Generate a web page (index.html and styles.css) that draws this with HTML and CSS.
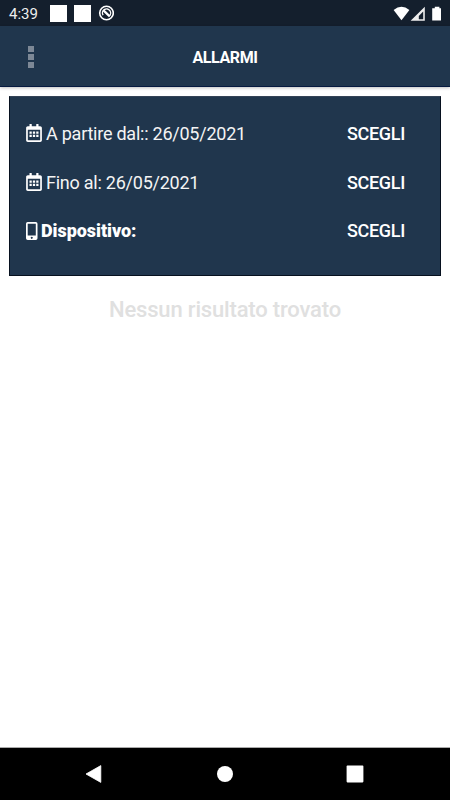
FILE: index.html
```html
<!DOCTYPE html>
<html lang="it">
<head>
    <meta charset="UTF-8">
    <meta name="viewport" content="width=device-width, initial-scale=1.0">
    <title>Allarmi</title>
    <link rel="stylesheet" href="styles.css">
</head>
<body>
    <svg width="0" height="0" class="defs">
        <symbol id="calendar" viewBox="0 0 448 512">
            <path fill-rule="evenodd" d="M400 64h-48V12c0-7-5-12-12-12h-40c-7 0-12 5-12 12v52H160V12c0-7-5-12-12-12h-40c-7 0-12 5-12 12v52H48C22 64 0 86 0 112v352c0 26 22 48 48 48h352c26 0 48-22 48-48V112c0-26-22-48-48-48zM48 160h352v298c0 3-3 6-6 6H54c-3 0-6-3-6-6z"/>
            <path d="M96 210h64v64H96zM192 210h64v64h-64zM288 210h64v64h-64zM96 306h64v64H96zM192 306h64v64h-64zM288 306h64v64h-64z"/>
        </symbol>
    </svg>

    <div class="status-bar">
        <span class="clock">4:39</span>
        <span class="notification"></span>
        <span class="notification"></span>
        <svg class="app-icon" viewBox="0 0 16 16">
            <circle cx="8.5" cy="8" r="6.8" fill="none" stroke="#fff" stroke-width="1.6"/>
            <path d="M5.1 10.2A4.1 4.1 0 1 1 11.1 11.2" fill="none" stroke="#fff" stroke-width="1.4"/>
            <path d="M5.7 5.6l6 5.8" stroke="#fff" stroke-width="2.2"/>
        </svg>
        <svg class="system-icons" viewBox="0 0 50 16">
            <path d="M0.6 4Q8.5-2.6 16.4 4L8.5 14.2z" fill="#fff"/>
            <path fill-rule="evenodd" d="M31.8 0.8V14.8H17.6zM30.2 5.5L25.8 10V13.2H30.2z" fill="#eee"/>
            <path d="M41.8 0.8h4.6v1.4H48v12.4h-8.8V2.2h2.6z" fill="#fff"/>
        </svg>
    </div>

    <header class="header">
        <button class="menu" aria-label="Menu"><span></span><span></span><span></span></button>
        <h1>ALLARMI</h1>
    </header>

    <main>
        <div class="filters">
            <div class="row">
                <svg class="calendar"><use href="#calendar"/></svg>
                <span class="label">A partire dal:: 26/05/2021</span>
                <button class="btn">SCEGLI</button>
            </div>
            <div class="row">
                <svg class="calendar"><use href="#calendar"/></svg>
                <span class="label">Fino al: 26/05/2021</span>
                <button class="btn">SCEGLI</button>
            </div>
            <div class="row">
                <svg class="phone" viewBox="0 0 12 18">
                    <path fill-rule="evenodd" d="M1.7 0h8.1q1.7 0 1.7 1.7v14.6q0 1.7-1.7 1.7H1.7Q0 18 0 16.3V1.7Q0 0 1.7 0zM1.7 1.8v11.8h8.1V1.8zM5.75 14.7a1 1 0 1 0 0.01 0z"/>
                </svg>
                <span class="label device">Dispositivo:</span>
                <button class="btn">SCEGLI</button>
            </div>
        </div>
        <p class="empty">Nessun risultato trovato</p>
    </main>

    <nav class="nav-bar">
        <svg viewBox="0 0 18 18"><path d="M1 9L15.8 0.6V17.4z" stroke="#fff" stroke-width="0.8" stroke-linejoin="round"/></svg>
        <svg viewBox="0 0 18 18"><circle cx="9" cy="9" r="8"/></svg>
        <svg viewBox="0 0 18 18"><rect x="0.6" y="0.6" width="16.8" height="16.8" rx="0.8"/></svg>
    </nav>
</body>
</html>
```
FILE: styles.css
```css
* {
    box-sizing: border-box;
}
body {
    margin: 0;
    height: 100vh;
    display: flex;
    flex-direction: column;
    overflow: hidden;
    font-family: Roboto, sans-serif;
    background: #fff;
    color: #fff;
}
button {
    padding: 0;
    border: none;
    background: none;
    color: inherit;
    font-family: inherit;
}
.defs {
    position: absolute;
}
.status-bar {
    height: 26px;
    flex: none;
    display: flex;
    align-items: center;
    padding: 1px 8px 0 9px;
    background: #141f2d;
}
.clock {
    width: 41px;
    font-size: 15px;
    color: #eee;
}
.notification {
    width: 17px;
    height: 17px;
    margin-right: 7px;
    background: #fff;
}
.app-icon {
    width: 16px;
    height: 16px;
    margin-top: -1px;
}
.system-icons {
    width: 50px;
    height: 16px;
    margin-left: auto;
    margin-right: -1px;
}
.header {
    height: 61px;
    flex: none;
    display: grid;
    grid-template-columns: 62px 1fr 62px;
    align-items: center;
    background: #20364d;
    border-bottom: 1px solid #061a40;
    box-shadow: 0 1px 3px rgba(0, 0, 0, 0.25);
}
.header h1 {
    margin: 2px 0 0;
    text-align: center;
    font-size: 16px;
    font-weight: 700;
    letter-spacing: -0.4px;
}
.menu {
    display: flex;
    flex-direction: column;
    align-items: center;
    gap: 2px;
    padding-top: 1px;
}
.menu span {
    width: 6px;
    height: 6px;
    background: #7d8896;
}
main {
    flex: 1;
}
.filters {
    height: 180px;
    margin: 9px 9px 0;
    padding: 12px 35px 0 16px;
    background: #20364d;
    border: 1px solid #07111f;
    border-top-color: #344357;
}
.row {
    display: flex;
    align-items: center;
    height: 48.7px;
}
.row svg {
    height: 18px;
    flex: none;
    fill: #fff;
}
.calendar {
    width: 16px;
    margin-right: 4px;
}
.phone {
    width: 12px;
    margin-right: 3px;
}
.label {
    font-size: 18px;
    letter-spacing: -0.24px;
    color: #f4f4f4;
    white-space: nowrap;
}
.device {
    font-weight: 900;
    letter-spacing: -0.05px;
    color: #fff;
}
.btn {
    margin-left: auto;
    font-size: 18px;
    font-weight: 500;
    letter-spacing: -0.3px;
}
.empty {
    margin: 20px 0 0;
    text-align: center;
    font-size: 22px;
    line-height: 28px;
    font-weight: 500;
    letter-spacing: -0.17px;
    color: #e0e0e0;
}
.nav-bar {
    height: 53px;
    flex: none;
    display: flex;
    justify-content: space-between;
    align-items: center;
    padding: 0 86px 0 85px;
    background: #000;
    border-top: 1px solid #aaa;
}
.nav-bar svg {
    width: 18px;
    height: 18px;
    fill: #fff;
}
```
